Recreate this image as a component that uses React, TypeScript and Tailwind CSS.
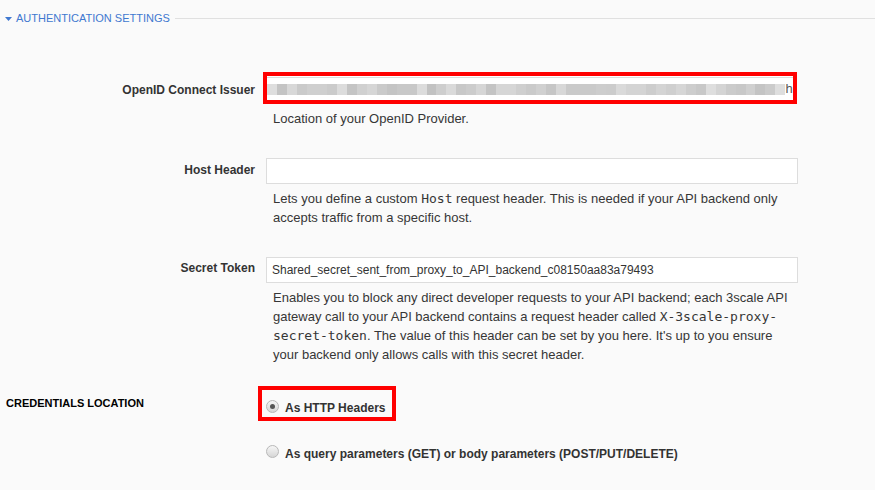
import type { ReactNode } from "react";

const BLUR = [
  "#dedede", "#c4c4c4", "#d8d8d8", "#cacaca", "#cfcfcf", "#cfcfcf", "#cbcbcb", "#dcdcdc", "#c4c4c4", "#d0d0d0",
  "#d6d6d6", "#cacaca", "#c4c4c4", "#c8c8c8", "#c8c8c8", "#dcdcdc", "#c2c2c2", "#cecece", "#dadada", "#c8c8c8",
  "#cccccc", "#d6d6d6", "#c4c4c4", "#d6d6d6", "#d6d6d6", "#cfcfcf", "#cacaca", "#d0d0d0", "#c6c6c6", "#d8d8d8",
  "#cacaca", "#cacaca", "#cacaca", "#cdcdcd", "#cccccc", "#dadada", "#d4d4d4", "#d4d4d4", "#cdcdcd", "#d4d4d4",
  "#cfcfcf", "#d6d6d6", "#cdcdcd", "#c8c8c8", "#dedede", "#d4d4d4", "#cbcbcb", "#c8c8c8", "#d0d0d0", "#c4c4c4",
  "#cbcbcb", "#dedede",
];

function Code({ children }: { children: ReactNode }) {
  return <code className="font-['DejaVu_Sans_Mono',monospace] text-[13px]">{children}</code>;
}

function Field({
  label,
  labelTop,
  control,
  help,
  className,
}: {
  label: string;
  labelTop: string;
  control: ReactNode;
  help: ReactNode;
  className: string;
}) {
  return (
    <div className={className}>
      <div className="flex items-start">
        <div className={`w-[255px] shrink-0 text-right text-[12px] font-bold leading-[16px] text-[#333] ${labelTop}`}>
          {label}
        </div>
        {control}
      </div>
      <div className="mt-[5px] ml-[273px] whitespace-nowrap text-[13px] leading-[19px] text-[#363636]">{help}</div>
    </div>
  );
}

function Radio({ checked }: { checked?: boolean }) {
  return (
    <span className="flex h-[13px] w-[13px] shrink-0 items-center justify-center rounded-full border border-[#b8b8b8] bg-gradient-to-b from-[#f6f6f6] to-[#d6d6d6]">
      {checked && <span className="h-[5px] w-[5px] rounded-full bg-[#555]" />}
    </span>
  );
}

export default function App() {
  return (
    <div className="h-[490px] w-[875px] overflow-hidden bg-[#fafafa] font-['Liberation_Sans',Arial,sans-serif]">
      <div className="flex h-[25px] items-center pt-[12px] pl-[5px]">
        <svg width="7" height="4" viewBox="0 0 7 4" className="shrink-0">
          <path d="M0 0h7L3.5 4z" fill="#3f78d0" />
        </svg>
        <span className="ml-[4px] text-[11px] leading-[13px] text-[#3f78d0]">AUTHENTICATION SETTINGS</span>
        <div className="ml-[5px] h-px flex-1 bg-[#e0e0e0]" />
      </div>

      <Field
        className="mt-[47px]"
        label="OpenID Connect Issuer"
        labelTop="pt-[10px]"
        control={
          <div className="ml-[8px] h-[32px] w-[534px] border-4 border-[#ff0000] bg-white">
            <div className="mt-px flex h-[23px] items-start border-t border-[#dddddd] pt-[6px]">
              {BLUR.map((c, i) => (
                <div key={i} className="h-[11px] w-[10px]" style={{ background: c }} />
              ))}
              <span className="-mt-[2px] text-[13px] leading-[13px] text-[#555]">h</span>
            </div>
          </div>
        }
        help="Location of your OpenID Provider."
      />

      <Field
        className="mt-[30px]"
        label="Host Header"
        labelTop="pt-[4px]"
        control={<div className="ml-[11px] h-[26px] w-[532px] border border-[#dddddd] bg-white" />}
        help={
          <>
            Lets you define a custom <Code>Host</Code> request header. This is needed if your API backend only
            <br />
            accepts traffic from a specific host.
          </>
        }
      />

      <Field
        className="mt-[30px]"
        label="Secret Token"
        labelTop="pt-[3px]"
        control={
          <div className="ml-[11px] flex h-[26px] w-[532px] items-center border border-[#dddddd] bg-white px-[5px] text-[12px] text-[#333]">
            Shared_secret_sent_from_proxy_to_API_backend_c08150aa83a79493
          </div>
        }
        help={
          <>
            Enables you to block any direct developer requests to your API backend; each 3scale API
            <br />
            gateway call to your API backend contains a request header called <Code>X-3scale-proxy-</Code>
            <br />
            <Code>secret-token</Code>. The value of this header can be set by you here. It's up to you ensure
            <br />
            your backend only allows calls with this secret header.
          </>
        }
      />

      <div className="mt-[22px] flex items-start">
        <div className="w-[258px] shrink-0 pt-[11px] pl-[6px] text-[11px] font-bold leading-[13px] text-black">
          CREDENTIALS LOCATION
        </div>
        <div>
          <div className="flex h-[35px] w-[138px] items-start border-4 border-[#ff0000] pt-[10px] pl-[4px]">
            <Radio checked />
            <span className="ml-[6px] text-[12px] font-bold leading-[16px] text-[#333]">As HTTP Headers</span>
          </div>
          <div className="mt-[24px] flex items-start pl-[8px]">
            <Radio />
            <span className="mt-px ml-[6px] whitespace-nowrap text-[12px] font-bold leading-[16px] text-[#333]">
              As query parameters (GET) or body parameters (POST/PUT/DELETE)
            </span>
          </div>
        </div>
      </div>
    </div>
  );
}
